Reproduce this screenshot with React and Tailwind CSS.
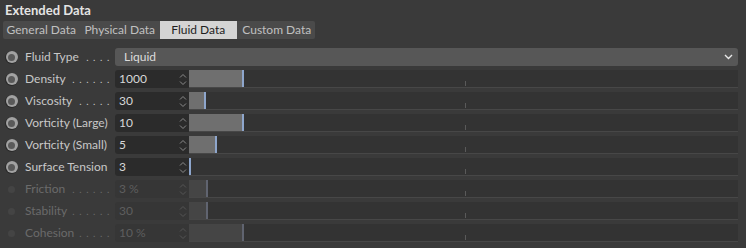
import React from "react";

// Danh sách thông số của tab Fluid Data
const rows = [
  { label: "Density", dots: 6, value: "1000", fill: 53 },
  { label: "Viscosity", dots: 5, value: "30", fill: 15 },
  { label: "Vorticity (Large)", dots: 0, value: "10", fill: 53 },
  { label: "Vorticity (Small)", dots: 0, value: "5", fill: 26 },
  { label: "Surface Tension", dots: 0, value: "3", fill: 0 },
  { label: "Friction", dots: 6, value: "3 %", fill: 17, disabled: true },
  { label: "Stability", dots: 6, value: "30", fill: 17, disabled: true },
  { label: "Cohesion", dots: 5, value: "10 %", fill: 53, disabled: true },
];

const tabs = ["General Data", "Physical Data", "Fluid Data", "Custom Data"];

function Radio({ disabled }) {
  if (disabled) {
    return (
      <div className="w-[13px] h-[13px] flex items-center justify-center">
        <div className="w-[7px] h-[7px] rounded-full bg-[#444]" />
      </div>
    );
  }
  return (
    <div className="w-[13px] h-[13px] rounded-full bg-[#2a2a2a] flex items-center justify-center">
      <div className="w-[12px] h-[12px] rounded-full bg-[#a2a2a2] flex items-center justify-center">
        <div className="w-[7px] h-[7px] rounded-full bg-[#5a5a5a]" />
      </div>
    </div>
  );
}

function Label({ text, dots, disabled }) {
  return (
    <div
      className={
        "w-[88px] ml-[7px] flex items-center whitespace-nowrap " +
        (disabled ? "text-[#6a6a6a]" : "text-[#c8c8c8]")
      }
    >
      <span>{text}</span>
      <span className="flex-1" />
      {dots > 0 && (
        <span className="tracking-[4.6px] mr-[-1px] text-[10px]">{".".repeat(dots)}</span>
      )}
    </div>
  );
}

function Spinner({ disabled }) {
  const c = disabled ? "#555" : "#8a8a8a";
  return (
    <svg width="8" height="13" viewBox="0 0 8 13" fill="none">
      <path d="M1 4.5 L4 1.5 L7 4.5" stroke={c} strokeWidth="1" />
      <path d="M1 8.5 L4 11.5 L7 8.5" stroke={c} strokeWidth="1" />
    </svg>
  );
}

function ParamRow({ row }) {
  const d = row.disabled;
  return (
    <div className="h-[22px] flex items-center pl-[5px] pr-[8px]">
      <Radio disabled={d} />
      <Label text={row.label} dots={row.dots} disabled={d} />
      <div
        className={
          "ml-[2px] w-[74px] h-[18px] rounded-l-[3px] flex items-center pl-[4px] pr-[2px] " +
          (d ? "bg-[#363636] text-[#5e5e5e]" : "bg-[#2b2b2b] text-[#d8d8d8]")
        }
      >
        <span className="flex-1">{row.value}</span>
        <Spinner disabled={d} />
      </div>
      <div className="flex-1 h-[18px] bg-[#333333] border-b border-[#474747] flex relative">
        <div
          className={d ? "bg-[#454545] h-full" : "bg-[#6f6f6f] h-full"}
          style={{ width: row.fill }}
        />
        <div className={d ? "w-[2px] h-full bg-[#606470]" : "w-[2px] h-full bg-[#8ea6cc]"} />
        <div className="absolute left-[276px] bottom-[1px] w-px h-[5px] bg-[#5a5a5a]" />
      </div>
    </div>
  );
}

export default function App() {
  return (
    <div
      className="w-[746px] h-[248px] bg-[#3a3a3a] text-[12px] overflow-hidden"
      style={{ fontFamily: 'Lato, "Open Sans", sans-serif' }}
    >
      <div className="h-[21px] pl-[5px] pt-[1px] text-[13px] font-bold text-[#e4e4e4]">Extended Data</div>

      <div className="ml-[3px] w-[312px] h-[18px] bg-[#4a4a4a] flex gap-[2px] rounded-[2px]">
        {tabs.map((t) => (
          <div
            key={t}
            className={
              "w-[77px] flex items-center justify-center leading-none " +
              (t === "Fluid Data" ? "bg-[#d4d4d4] text-[#1e1e1e]" : "text-[#c0c0c0]")
            }
          >
            {t}
          </div>
        ))}
      </div>

      <div className="mt-[7px]">
        <div className="h-[22px] flex items-center pl-[5px] pr-[8px]">
          <Radio />
          <Label text="Fluid Type" dots={4} />
          <div className="ml-[2px] flex-1 h-[18px] bg-[#575757] rounded-[3px] flex items-center pl-[9px] pr-[5px] text-[#dcdcdc]">
            <span className="flex-1">Liquid</span>
            <svg width="9" height="6" viewBox="0 0 9 6" fill="none">
              <path d="M1 1 L4.5 4.5 L8 1" stroke="#e8e8e8" strokeWidth="1.4" />
            </svg>
          </div>
        </div>
        {rows.map((r) => (
          <ParamRow key={r.label} row={r} />
        ))}
      </div>
    </div>
  );
}
